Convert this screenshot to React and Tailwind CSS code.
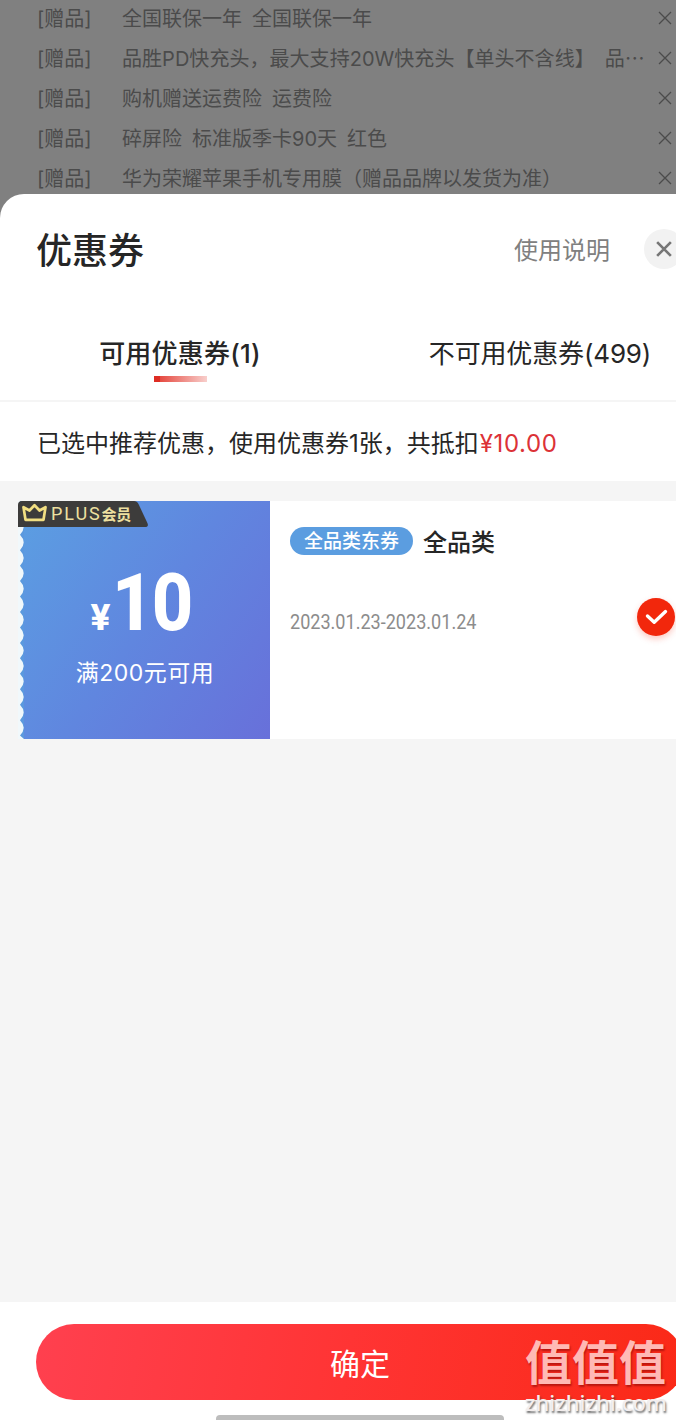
const gifts = [
  '全国联保一年 全国联保一年',
  '品胜PD快充头，最大支持20W快充头【单头不含线】 品',
  '购机赠送运费险 运费险',
  '碎屏险 标准版季卡90天 红色',
  '华为荣耀苹果手机专用膜（赠品品牌以发货为准）',
];

const notches = Array.from({ length: 14 }, (_, i) => 18.3 + i * 15.45);
const edgePath =
  'M6 0 L2 0 L2 18.3 ' +
  notches.map((y) => `Q9.4 ${y + 7.7} 2 ${y + 15.45}`).join(' ') +
  ' L6 238 Z';

function Cross({ className, width }) {
  return (
    <svg viewBox="0 0 14 14" className={className} fill="none" stroke="currentColor" strokeWidth={width}>
      <path d="M1 1L13 13M13 1L1 13" />
    </svg>
  );
}

function GiftRow({ text, more }) {
  return (
    <li className="flex h-10 items-center text-xl [word-spacing:4.4px]">
      <span className="w-[85px] whitespace-nowrap pt-px">[赠品]</span>
      <span className={more ? 'flex-1 whitespace-nowrap tracking-[0.04px]' : 'flex-1 whitespace-nowrap pt-px'}>
        {text}
        {more && <span className="font-['Noto_Sans_CJK_SC',sans-serif]">…</span>}
      </span>
      <Cross className="mr-1 size-3.5 shrink-0" width={1.3} />
    </li>
  );
}

function Coupon() {
  return (
    <article className="ml-[18px] flex h-[238px] bg-white">
      <div className="relative flex w-[252px] shrink-0">
        <svg className="h-[238px] w-1.5 shrink-0 bg-[#f1f8fb]" viewBox="0 0 6 238">
          <path d={edgePath} fill="#5b99de" />
        </svg>
        <div className="flex flex-1 flex-col items-center bg-[linear-gradient(125deg,#5b9fe2_0%,#6086df_50%,#6870da_100%)] text-white">
          <div className="mt-[62px] flex h-20 items-baseline pr-[11px] font-['Roboto',sans-serif] font-extrabold leading-[80px]">
            <span className="mr-0.5 text-[37px]">¥</span>
            <span className="-mr-2 origin-left scale-x-[0.9] text-[80px] tracking-[-2px]">10</span>
          </div>
          <p className="mt-[13px] -ml-1 text-[23px] leading-[34px] tracking-[0.5px]">满200元可用</p>
        </div>
        <div className="absolute left-0 top-0 flex h-[26px] w-[130px] items-center">
          <svg className="absolute inset-0 h-[26px] w-[130px]" viewBox="0 0 130 26">
            <path d="M0 26V4Q0 0 4 0H116Q119 0 120.5 3L129.4 22Q131 26 127 26Z" fill="#3d3c3b" />
            <g fill="none" stroke="#f2df82" strokeWidth="2.7" strokeLinejoin="round">
              <path d="M5.5 6.2L7.5 18.8H25.5L27.5 6.2L21.5 9.5L16.5 4.2L11.5 9.5Z" />
            </g>
          </svg>
          <span className="relative ml-[33px] -mt-px whitespace-nowrap text-[#eee0a0]">
            <span className="font-['Roboto',sans-serif] text-[18px] tracking-[1.9px]">PLUS</span>
            <span className="text-[15px] font-bold tracking-[-0.3px]">会员</span>
          </span>
        </div>
      </div>
      <div className="flex flex-1 flex-col pl-5">
        <div className="mt-[22px] flex h-9 items-center">
          <span className="flex h-7 w-[123px] items-center justify-center rounded-full bg-[#5b9de0] pt-0.5 text-[19px] font-medium text-white">
            全品类东券
          </span>
          <span className="ml-2.5 pt-[3px] text-2xl font-medium text-[#262626]">全品类</span>
        </div>
        <div className="mt-[34px] flex h-12 items-center justify-between">
          <span className="w-[186px] origin-left scale-x-[0.86] whitespace-nowrap pt-3 font-['Roboto',sans-serif] text-[21px] text-[#8c8c8c]">
            2023.01.23-2023.01.24
          </span>
          <span className="mr-[1px] flex size-[38px] items-center justify-center rounded-full bg-[#f2270c] shadow-[0_3px_6px_rgba(242,39,12,0.25)]">
            <svg className="h-4 w-[23px]" viewBox="0 0 23 16" fill="none" stroke="#fff" strokeWidth="3.4" strokeLinecap="round" strokeLinejoin="round">
              <path d="M2.5 7L9.2 13.2L20.5 2.6" />
            </svg>
          </span>
        </div>
      </div>
    </article>
  );
}

export default function App() {
  return (
    <div className="relative flex h-[1420px] w-[676px] flex-col overflow-hidden bg-[#808080] font-['Inter','Noto_Sans_CJK_SC',sans-serif]">
      <ul className="-mt-0.5 h-[196px] shrink-0 pl-[37px] text-[#4b4b4b]">
        {gifts.map((text, i) => (
          <GiftRow key={text} text={text} more={i === 1} />
        ))}
      </ul>
      <section className="flex flex-1 flex-col overflow-hidden rounded-tl-[24px] bg-white text-[#262626]">
        <header className="flex h-[110px] shrink-0 items-center pl-9">
          <h1 className="flex-1 pt-1 text-4xl font-medium">优惠券</h1>
          <span className="pt-[3px] text-2xl text-[#808080]">使用说明</span>
          <span className="-mr-2 ml-[34px] flex size-10 items-center justify-center rounded-full bg-[#f2f2f2] text-[#777]">
            <Cross className="size-4" width={2.3} />
          </span>
        </header>
        <nav className="flex h-[98px] w-[720px] shrink-0 border-b-2 border-[#f5f5f5] text-[26px]">
          <div className="flex w-[360px] flex-col items-center pt-[30px]">
            <span className="font-medium leading-10 tracking-[0.2px]">可用优惠券(1)</span>
            <span className="mt-0.5 h-1.5 w-[53px] bg-[linear-gradient(90deg,#de2d23_0%,#de2d23_11%,#e64b42_12%,#f8cfcc_100%)]" />
          </div>
          <div className="w-[360px] pt-[30px] text-center leading-10 tracking-[-0.15px]">不可用优惠券(499)</div>
        </nav>
        <p className="flex h-[79px] shrink-0 items-center whitespace-nowrap pt-1 pl-[37px] text-2xl">
          已选中推荐优惠，使用优惠券1张，共抵扣
          <span className="ml-px tracking-[0.6px] text-[#dc3237]">¥10.00</span>
        </p>
        <main className="flex-1 bg-[#f5f5f5] pt-5">
          <Coupon />
        </main>
        <footer className="flex h-[118px] shrink-0 flex-col bg-white pt-[22px]">
          <button className="ml-9 h-[76px] w-[648px] shrink-0 rounded-full bg-[linear-gradient(100deg,#ff404f_0%,#ff3434_48%,#fa2916_100%)] pt-[3px] text-3xl text-white">
            确定
          </button>
          <div className="ml-[216px] mt-[15px] h-[5px] w-[288px] rounded-t-sm bg-[#bdbdbd]" />
        </footer>
      </section>
      <div className="absolute bottom-1 left-[525px] flex w-[142px] flex-col">
        <span className="whitespace-nowrap text-[47px] font-bold leading-[50px] text-[#ffb9b5] [text-shadow:1px_2px_2px_rgba(120,0,0,0.5)]">
          值值值
        </span>
        <span className="font-['Noto_Sans',sans-serif] text-[22px] font-medium leading-7 text-[#f3eeee] [text-shadow:1px_2px_2px_rgba(60,60,60,0.75)]">
          zhizhizhi.com
        </span>
      </div>
    </div>
  );
}
